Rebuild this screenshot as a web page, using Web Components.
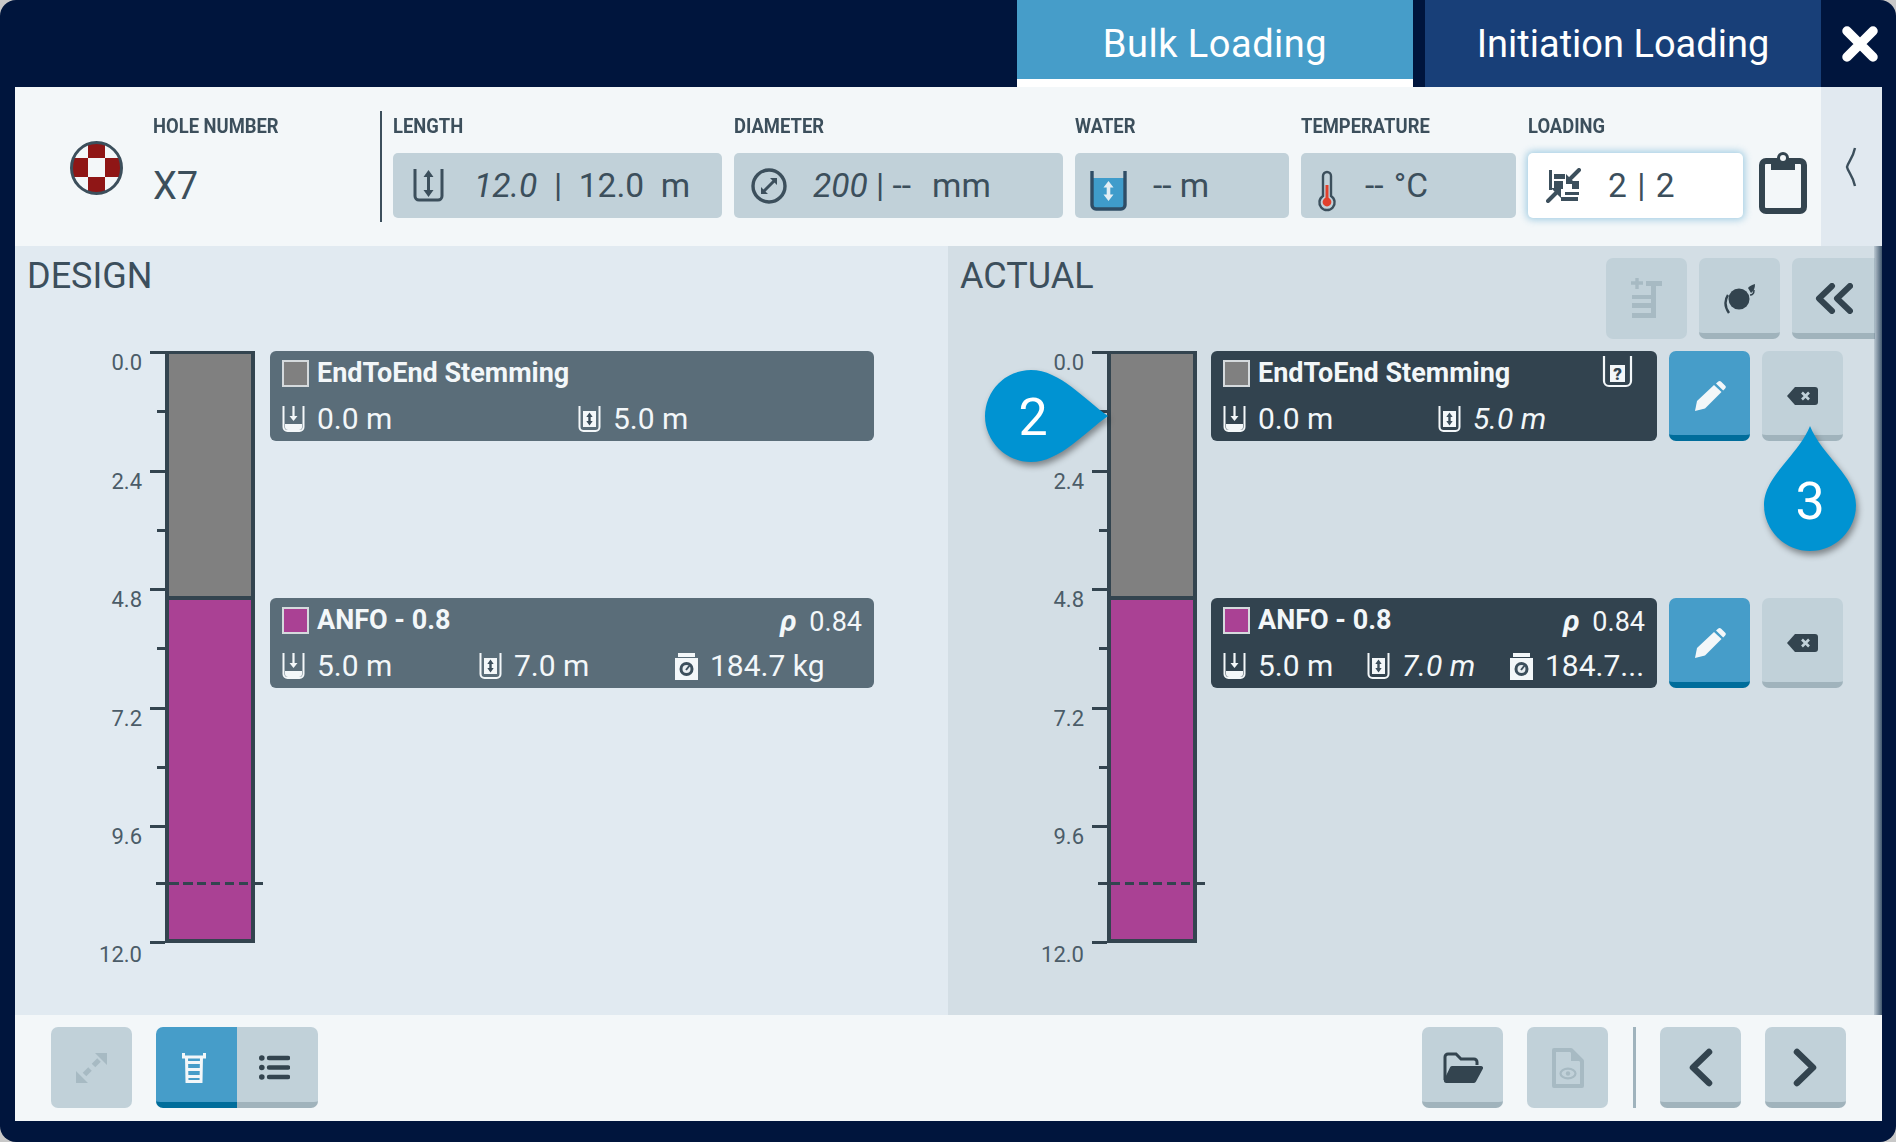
<!DOCTYPE html>
<html>
<head>
<meta charset="utf-8">
<title>Bulk Loading</title>
<style>
    html, body { margin: 0; padding: 0; background: #c8c8c8; }
    body { font-family: Roboto, "Liberation Sans", sans-serif; color: #3c4f5c; }
</style>
</head>
<body>

<load-frame>
    <tab-bar slot="top">
        <tab-item active>Bulk Loading</tab-item>
        <tab-item>Initiation Loading</tab-item>
    </tab-bar>

    <hole-header slot="header">
        <span slot="hole">X7</span>
        <info-field label="LENGTH" icon="length" w="329" iw="31" ih="34" pad="20" gap="30"><i>12.0</i>&nbsp;&nbsp;|&nbsp;&nbsp;12.0&nbsp;&nbsp;m</info-field>
        <info-field label="DIAMETER" icon="diameter" w="329" iw="36" ih="36" pad="17" gap="26"><i>200</i> | --&nbsp;&nbsp;&nbsp;<span style="margin-left:-4px">mm</span></info-field>
        <info-field label="WATER" icon="water" w="214" iw="37" ih="40" pad="15" gap="26">-- m</info-field>
        <info-field label="TEMPERATURE" icon="thermo" w="215" iw="18" ih="40" pad="17" gap="29">-- <span style="margin-left:2px">°C</span></info-field>
        <info-field label="LOADING" icon="loading" w="215" iw="36" ih="35" pad="18" gap="26" active>2 | 2</info-field>
    </hole-header>

    <deck-panel slot="design" heading="DESIGN">
        <depth-column></depth-column>
        <deck-list style="--card-w:604px">
            <deck-card color="#808080" style="--card-bg:#5a6d79">
                <span slot="title">EndToEnd Stemming</span>
                <deck-stat icon="cup-down" w="296">0.0 m</deck-stat>
                <deck-stat icon="cup-len">5.0 m</deck-stat>
            </deck-card>
            <deck-card color="#aa4194" density="0.84" style="--card-bg:#5a6d79">
                <span slot="title">ANFO - 0.8</span>
                <deck-stat icon="cup-down" w="197">5.0 m</deck-stat>
                <deck-stat icon="cup-len" w="196">7.0 m</deck-stat>
                <deck-stat icon="scale">184.7 kg</deck-stat>
            </deck-card>
        </deck-list>
    </deck-panel>

    <deck-panel slot="actual" heading="ACTUAL" actual>
        <icon-btn slot="actions" icon="add" iw="31" ih="41" disabled></icon-btn>
        <icon-btn slot="actions" icon="ball" iw="31" ih="31"></icon-btn>
        <icon-btn slot="actions" icon="dchev" iw="38" ih="31" wide></icon-btn>
        <depth-column></depth-column>
        <deck-list style="--card-w:446px">
            <deck-row>
                <deck-card color="#808080" unknown style="--card-bg:#32434f">
                    <span slot="title">EndToEnd Stemming</span>
                    <deck-stat icon="cup-down" w="215">0.0 m</deck-stat>
                    <deck-stat icon="cup-len" italic>5.0 m</deck-stat>
                </deck-card>
                <icon-btn slot="actions" icon="pencil" iw="32" ih="30" primary tall></icon-btn>
                <icon-btn slot="actions" icon="backspace" iw="31" ih="18" tall></icon-btn>
            </deck-row>
            <deck-row>
                <deck-card color="#aa4194" density="0.84" style="--card-bg:#32434f">
                    <span slot="title">ANFO - 0.8</span>
                    <deck-stat icon="cup-down" w="144">5.0 m</deck-stat>
                    <deck-stat icon="cup-len" w="143" italic>7.0 m</deck-stat>
                    <deck-stat icon="scale">184.7...</deck-stat>
                </deck-card>
                <icon-btn slot="actions" icon="pencil" iw="32" ih="30" primary tall></icon-btn>
                <icon-btn slot="actions" icon="backspace" iw="31" ih="18" tall></icon-btn>
            </deck-row>
        </deck-list>
        <drop-pin slot="pins" dir="right" style="left:37px;top:124px">2</drop-pin>
        <drop-pin slot="pins" dir="up" style="left:816px;top:180px">3</drop-pin>
    </deck-panel>

    <foot-bar slot="footer">
        <icon-btn icon="expand" iw="31" ih="30" disabled></icon-btn>
        <btn-group>
            <icon-btn icon="ladder" iw="24" ih="30" primary joined="left" shift="5"></icon-btn>
            <icon-btn icon="list" iw="31" ih="25" joined="right" shift="6"></icon-btn>
        </btn-group>
        <span class="spacer" style="flex:1"></span>
        <icon-btn icon="folder" iw="40" ih="31"></icon-btn>
        <icon-btn icon="file" iw="33" ih="40" disabled style="margin-left:24px"></icon-btn>
        <span style="width:3px;height:81px;background:#9fb3bd;margin:0 24px 0 25px"></span>
        <icon-btn icon="prev" iw="25" ih="39"></icon-btn>
        <icon-btn icon="next" iw="25" ih="39" style="margin-left:24px"></icon-btn>
    </foot-bar>
</load-frame>

<script>
const ICONS = {
    length: `<svg viewBox="0 0 31 34"><path d="M2 0V27a4 4 0 0 0 4 4H25a4 4 0 0 0 4-4V0" fill="none" stroke="currentColor" stroke-width="3"/><path d="M15.5 4V24" stroke="currentColor" stroke-width="3"/><path d="M15.5 1l5 7h-10zM15.5 28l5-7h-10z" fill="currentColor"/></svg>`,
    diameter: `<svg viewBox="0 0 36 36"><circle cx="18" cy="18" r="16" fill="none" stroke="currentColor" stroke-width="3.4"/><path d="M13 23L23 13" stroke="currentColor" stroke-width="3"/><path d="M26 10v7l-7-7zM10 26v-7l7 7z" fill="currentColor"/></svg>`,
    water: `<svg viewBox="0 0 37 40" style="margin-top:5px"><path d="M3 7H34V34a3 3 0 0 1-3 3H6a3 3 0 0 1-3-3z" fill="#3f9ccb"/><path d="M2 0V34a4 4 0 0 0 4 4H31a4 4 0 0 0 4-4V0" fill="none" stroke="#2f4d66" stroke-width="3.4"/><path d="M18.5 10l5 6.5h-3.2v7h3.2l-5 6.5-5-6.5h3.2v-7h-3.2z" fill="#e3eef4"/></svg>`,
    thermo: `<svg viewBox="0 0 18 40" style="margin-top:5px"><path d="M5 5a4 4 0 0 1 8 0V25a7.6 7.6 0 1 1-8 0z" fill="none" stroke="currentColor" stroke-width="2.4"/><rect x="7.5" y="14" width="3" height="14" fill="#e2402c"/><circle cx="9" cy="31" r="4.4" fill="#e2402c"/></svg>`,
    loading: `<svg viewBox="0 0 36 35"><path d="M3 2h3v20H3zM8 6h11v5H8zM8 13h9v8H8zM26 13h7v8h-7zM19 24h14v3H19zM15 29h17v4H15z" fill="currentColor"/><path d="M33 2L25 10M2 33L10 25" stroke="currentColor" stroke-width="4" stroke-linecap="round"/><path d="M20 16V6L30 16zM15 20V30L5 20z" fill="currentColor"/></svg>`,
    clipboard: `<svg viewBox="0 0 48 63"><rect x="3" y="10" width="42" height="50" rx="4" fill="none" stroke="currentColor" stroke-width="6"/><path d="M12 7H18a6 6 0 0 1 12 0H36V19H12z" fill="currentColor"/><circle cx="24" cy="7" r="3" fill="#f3f7f9"/></svg>`,
    strip: `<svg viewBox="0 0 14 40"><path d="M11 1C9 11 4 15 3 20C4 25 9 29 11 39" fill="none" stroke="currentColor" stroke-width="2.4"/></svg>`,
    add: `<svg viewBox="0 0 31 41"><path d="M0 5H12M6 -1V11" stroke="currentColor" stroke-width="3.4"/><path d="M15 3H31V8H25V40H1V35H20V30H1V25H20V21H1V17H20V8H15z" fill="currentColor"/></svg>`,
    ball: `<svg viewBox="0 0 31 31"><circle cx="15" cy="16" r="10.5" fill="currentColor"/><path d="M24 5C25 3 28 2 31 1C31 5 30 8 27 10z" fill="currentColor"/><path d="M4 12C0 18 1 24 5 30" fill="none" stroke="currentColor" stroke-width="2.4"/><path d="M26 12C29 12 30 10 30 7" fill="none" stroke="currentColor" stroke-width="1.5"/></svg>`,
    dchev: `<svg viewBox="0 0 38 31"><path d="M17 3L4 15.5L17 28M35 3L22 15.5L35 28" fill="none" stroke="currentColor" stroke-width="6" stroke-linecap="round" stroke-linejoin="round"/></svg>`,
    'cup-down': `<svg viewBox="0 0 23 27"><path d="M1.5 0V21a4 4 0 0 0 4 4H17.5a4 4 0 0 0 4-4V0" fill="none" stroke="currentColor" stroke-width="2"/><path d="M11.5 0V12" stroke="currentColor" stroke-width="2.2"/><path d="M7.5 10h8l-4 5z" fill="currentColor"/><path d="M3 18H20V21a3 3 0 0 1-3 3H6a3 3 0 0 1-3-3z" fill="currentColor"/></svg>`,
    'cup-len': `<svg viewBox="0 0 23 27"><path d="M1.5 0V21a4 4 0 0 0 4 4H17.5a4 4 0 0 0 4-4V0" fill="none" stroke="currentColor" stroke-width="2"/><rect x="5" y="5" width="13" height="16" fill="currentColor"/><path d="M11.5 6.5l3.2 4.4h-2v4.2h2l-3.2 4.4-3.2-4.4h2v-4.2h-2z" fill="#3c4f5c"/></svg>`,
    scale: `<svg viewBox="0 0 23 27"><path d="M3 0H20V4H3zM0 5H23V27H0z" fill="currentColor"/><circle cx="11.5" cy="16" r="7" fill="#3c4f5c"/><circle cx="11.5" cy="16" r="4" fill="#e9eef1"/><path d="M11 17L15 12" stroke="#3c4f5c" stroke-width="2"/></svg>`,
    pencil: `<svg viewBox="0 0 32 30"><path d="M1 30L3 20L20 4L27.5 11L11 27.5z" fill="currentColor"/><path d="M22 2.5L24 .8a2.4 2.4 0 0 1 3.2 0l3.8 3.6a2.4 2.4 0 0 1 0 3.4L29.2 9.4z" fill="currentColor"/></svg>`,
    backspace: `<svg viewBox="0 0 31 18"><path d="M8 0H28a3 3 0 0 1 3 3V15a3 3 0 0 1-3 3H8L0 9z" fill="currentColor"/><path d="M15 5.5L22 12.5M22 5.5L15 12.5" stroke="#c1d1d9" stroke-width="2.6"/></svg>`,
    expand: `<svg viewBox="0 0 31 30"><path d="M19 0H31V12zM0 18V30H12z" fill="currentColor"/><path d="M8.5 21.5L14 16M17.5 12.5L23 7" stroke="currentColor" stroke-width="5"/></svg>`,
    ladder: `<svg viewBox="0 0 24 30"><path d="M1.5 0V4H22.5V0M4.5 4L5 28.5H19L19.5 4M5 9.5H19M5 16.5H19M5 23.5H19" fill="none" stroke="currentColor" stroke-width="3"/></svg>`,
    list: `<svg viewBox="0 0 31 25"><circle cx="2.8" cy="3" r="2.8" fill="currentColor"/><circle cx="2.8" cy="12.5" r="2.8" fill="currentColor"/><circle cx="2.8" cy="22" r="2.8" fill="currentColor"/><path d="M10 3H29M10 12.5H29M10 22H29" stroke="currentColor" stroke-width="4.4" stroke-linecap="round"/></svg>`,
    folder: `<svg viewBox="0 0 40 31"><path d="M2 28V5a3 3 0 0 1 3-3h8l5 5h13a3 3 0 0 1 3 3v3" fill="none" stroke="currentColor" stroke-width="3"/><path d="M9 14H38a2 2 0 0 1 2 2.5L33 29.5A3 3 0 0 1 31 31H3a2.4 2.4 0 0 1-2-3L7 15.5A2 2 0 0 1 9 14z" fill="currentColor"/></svg>`,
    file: `<svg viewBox="0 0 33 40"><path d="M3 2H20L31 13V38H3z" fill="none" stroke="currentColor" stroke-width="4" stroke-linejoin="round"/><path d="M20 1L32 13H20z" fill="currentColor"/><ellipse cx="17" cy="25.5" rx="7.5" ry="4.8" fill="none" stroke="currentColor" stroke-width="2.2"/><circle cx="17" cy="25.5" r="2.2" fill="currentColor"/></svg>`,
    prev: `<svg viewBox="0 0 25 39"><path d="M21 4L5 19.5L21 35" fill="none" stroke="currentColor" stroke-width="6.5" stroke-linecap="round" stroke-linejoin="round"/></svg>`,
    next: `<svg viewBox="0 0 25 39"><path d="M4 4L20 19.5L4 35" fill="none" stroke="currentColor" stroke-width="6.5" stroke-linecap="round" stroke-linejoin="round"/></svg>`,
    close: `<svg viewBox="0 0 36 36"><path d="M5 5L31 31M31 5L5 31" fill="none" stroke="currentColor" stroke-width="9.5" stroke-linecap="round"/></svg>`,
    checker: `<svg viewBox="0 0 53 54"><defs><clipPath id="c"><ellipse cx="26.5" cy="27" rx="25" ry="25.5"/></clipPath></defs><g clip-path="url(#c)"><rect width="53" height="54" fill="#f3f7f9"/><path d="M18 0H35V17H18zM0 17H18V36H0zM35 17H53V36H35zM18 36H35V54H18z" fill="#8f1616"/></g><ellipse cx="26.5" cy="27" rx="25" ry="25.5" fill="none" stroke="currentColor" stroke-width="3"/></svg>`,
    unknown: `<svg viewBox="0 0 31 32"><path d="M2 0V25a5 5 0 0 0 5 5H24a5 5 0 0 0 5-5V0" fill="none" stroke="currentColor" stroke-width="2.2"/><rect x="8" y="9" width="15" height="17" fill="currentColor"/><text x="15.5" y="23.5" text-anchor="middle" font-family="Roboto" font-weight="900" font-size="17" fill="#32434f">?</text></svg>`
};

function iconHtml(name, w, h) {
    return `<span style="display:inline-flex;width:${w}px;height:${h}px;flex:none">${ICONS[name].replace('<svg ', `<svg width="${w}" height="${h}" `).replace('style="', 'style="overflow:visible;')}</span>`;
}

class Base extends HTMLElement {
    constructor() {
        super();
        this.attachShadow({ mode: 'open' });
    }
}

class LoadFrame extends Base {
    connectedCallback() {
        this.shadowRoot.innerHTML = `
            <style>
                :host { display: flex; flex-direction: column; width: 1896px; height: 1142px; box-sizing: border-box;
                        background: #00153d; border-radius: 16px; padding: 0 14px 21px 15px; overflow: hidden; }
                .panels { flex: 1; display: flex; min-height: 0; }
            </style>
            <slot name="top"></slot>
            <slot name="header"></slot>
            <div class="panels"><slot name="design"></slot><slot name="actual"></slot></div>
            <slot name="footer"></slot>
        `;
    }
}

class TabBar extends Base {
    connectedCallback() {
        this.shadowRoot.innerHTML = `
            <style>
                :host { display: flex; justify-content: flex-end; gap: 12px; height: 87px; position: relative; }
                .close { width: 61px; margin-left: -12px; display: flex; align-items: center; justify-content: flex-start; color: #fff; padding-left: 21px; box-sizing: border-box; }
            </style>
            <slot></slot>
            <div class="close">${iconHtml('close', 36, 36)}</div>
        `;
    }
}

class TabItem extends Base {
    connectedCallback() {
        this.shadowRoot.innerHTML = `
            <style>
                :host { display: flex; align-items: center; justify-content: center; width: 396px; height: 87px; box-sizing: border-box;
                        background: #183f78; color: #fff; font-size: 38px; }
                :host([active]) { background: #469dc9; box-shadow: inset 0 -8px 0 #fff; letter-spacing: .5px; }
            </style>
            <slot></slot>
        `;
    }
}

class HoleHeader extends Base {
    connectedCallback() {
        this.shadowRoot.innerHTML = `
            <style>
                :host { display: flex; height: 159px; background: #f3f7f9; color: #3c4f5c; }
                .hole { width: 365px; flex: none; display: flex; box-sizing: border-box; padding: 54px 0 0 55px; gap: 30px; }
                .hole-text { display: flex; flex-direction: column; margin-top: -27px; }
                .lbl { font-size: 20px; font-weight: 700; line-height: 24px; transform: scaleX(.92); transform-origin: left; white-space: nowrap; }
                .num { font-size: 38px; line-height: 44px; margin-top: 26px; }
                .div { width: 2px; height: 111px; margin-top: 24px; background: #3c4f5c; flex: none; margin-right: 11px; }
                .fields { display: flex; gap: 12px; flex: none; }
                .clip { margin: 64px 0 0 16px; color: #33444f; }
                .strip { margin-left: auto; width: 61px; background: #e1e9f0; color: #3c4f5c; padding: 60px 0 0 23px; box-sizing: border-box; }
            </style>
            <div class="hole">
                ${iconHtml('checker', 53, 54)}
                <div class="hole-text"><div class="lbl">HOLE NUMBER</div><div class="num"><slot name="hole"></slot></div></div>
            </div>
            <div class="div"></div>
            <div class="fields"><slot></slot></div>
            <div class="clip">${iconHtml('clipboard', 48, 63)}</div>
            <div class="strip">${iconHtml('strip', 14, 40)}</div>
        `;
    }
}

class InfoField extends Base {
    connectedCallback() {
        const a = n => this.getAttribute(n);
        this.shadowRoot.innerHTML = `
            <style>
                :host { display: flex; flex-direction: column; width: ${a('w')}px; padding-top: 27px; box-sizing: border-box; }
                .lbl { font-size: 20px; font-weight: 700; line-height: 24px; height: 24px; margin-bottom: 15px; transform: scaleX(.92); transform-origin: left; white-space: nowrap; }
                .box { height: 65px; background: #c1d1d9; border-radius: 5px; display: flex; align-items: center; padding-left: ${a('pad')}px; gap: ${a('gap')}px;
                       font-size: 33.5px; white-space: nowrap; box-sizing: border-box; }
                :host([active]) .box { background: #fff; box-shadow: 0 0 7px 2px rgba(70,157,201,.45); word-spacing: 2px; }
            </style>
            <div class="lbl">${a('label')}</div>
            <div class="box">${iconHtml(a('icon'), a('iw'), a('ih'))}<span><slot></slot></span></div>
        `;
    }
}

class DeckPanel extends Base {
    connectedCallback() {
        this.shadowRoot.innerHTML = `
            <style>
                :host { display: block; width: 933px; flex: none; position: relative; background: #e1eaf1; box-sizing: border-box; --axis-w: 126px; --axis-gap: 15px; }
                :host([actual]) { width: 934px; background: #d3dee5; --axis-w: 135px; --axis-gap: 14px; }
                .head { height: 105px; display: flex; justify-content: space-between; box-sizing: border-box; padding: 0 7px 0 12px; }
                h2 { margin: 10px 0 0; font-size: 36px; line-height: 40px; font-weight: 400; }
                .actions { display: flex; gap: 12px; padding-top: 12px; }
                .chart { display: flex; align-items: flex-start; }
                :host([actual]) .edge { position: absolute; top: 0; bottom: 0; right: 0; width: 8px;
                        background: linear-gradient(to right, rgba(60,85,110,.15), rgba(40,65,90,.85)); }
            </style>
            <div class="head"><h2>${this.getAttribute('heading')}</h2><div class="actions"><slot name="actions"></slot></div></div>
            <div class="chart"><slot></slot></div>
            <slot name="pins"></slot>
            <div class="edge"></div>
        `;
    }
}

class DepthColumn extends Base {
    connectedCallback() {
        let ticks = '';
        for (let i = 0; i <= 10; i++) {
            const major = i % 2 === 0;
            const label = major ? `<span class="v" ${i === 10 ? 'style="margin-top:1px"' : ''}>${(i * 1.2).toFixed(1)}</span>` : '';
            // the last interval of the scale is a bit shorter than the others
            const pull = i === 9 ? 'margin-top:-2px' : i === 10 ? 'margin-top:-1px' : '';
            ticks += `<div class="tick" style="${pull}">${label}<b class="${major ? 'maj' : 'min'}"></b></div>`;
        }
        this.shadowRoot.innerHTML = `
            <style>
                :host { display: flex; flex: none; height: 592px; margin-right: var(--axis-gap); }
                .axis { width: calc(var(--axis-w) + 24px); display: flex; flex-direction: column; gap: 56.25px; }
                .tick { display: flex; justify-content: flex-end; height: 3px; }
                .v { font-size: 22px; line-height: 26px; height: 3px; margin: -1px 8px 0 0; color: #4b5c68; }
                .tick b { height: 3px; background: #33444f; display: block; }
                .maj { width: 15px; }
                .min { width: 8px; }
                .bar { width: 90px; box-sizing: border-box; border: 4px solid #33444f; border-top-width: 3px; display: flex; flex-direction: column; position: relative; }
                .stem { flex: 5; background: #808080; border-bottom: 4px solid #33444f; }
                .anfo { flex: 7; background: #aa4194; }
                .limit { position: absolute; left: -13px; right: -12px; top: 528px; height: 3px; display: flex; }
                .limit i { width: 9px; background: #33444f; }
                .limit u { flex: 1; margin: 0 4px; background: repeating-linear-gradient(to right, #33444f 0 9.5px, transparent 9.5px 14px); }
            </style>
            <div class="axis">${ticks}</div>
            <div class="bar">
                <div class="stem"></div><div class="anfo"></div>
                <div class="limit"><i></i><u></u><i></i></div>
            </div>
        `;
    }
}

class DeckList extends Base {
    connectedCallback() {
        this.shadowRoot.innerHTML = `
            <style>:host { display: flex; flex-direction: column; gap: 157px; }</style>
            <slot></slot>
        `;
    }
}

class DeckRow extends Base {
    connectedCallback() {
        this.shadowRoot.innerHTML = `
            <style>
                :host { display: flex; gap: 12px; }
                .actions { display: flex; gap: 12px; }
            </style>
            <slot></slot><div class="actions"><slot name="actions"></slot></div>
        `;
    }
}

class DeckCard extends Base {
    connectedCallback() {
        const density = this.getAttribute('density');
        const color = this.getAttribute('color');
        this.shadowRoot.innerHTML = `
            <style>
                :host { display: flex; flex-direction: column; width: var(--card-w); height: 90px; box-sizing: border-box; flex: none;
                        background: var(--card-bg); border-radius: 6px; color: #f3f7f9; padding: 9px 12px 0 12px; }
                .top { display: flex; align-items: center; height: 27px; gap: 8px; }
                .sw { width: 27px; height: 27px; box-sizing: border-box; border: 2px solid #d5dadd; background: ${color}; flex: none; }
                .title { font-size: 27px; font-weight: 700; white-space: nowrap; flex: 1; line-height: 25px; }
                .rho { font-size: 27px; white-space: nowrap; }
                .rho i { font-weight: 700; font-size: 30px; margin-right: 6px; }
                .q { margin-right: 12px; }
                .stats { display: flex; margin-top: 18px; }
            </style>
            <div class="top">
                <div class="sw"></div>
                <div class="title"><slot name="title"></slot></div>
                ${density ? `<div class="rho"><i>ρ</i> ${density}</div>` : ''}
                ${this.hasAttribute('unknown') ? `<span class="q">${iconHtml('unknown', 31, 32)}</span>` : ''}
            </div>
            <div class="stats"><slot></slot></div>
        `;
    }
}

class DeckStat extends Base {
    connectedCallback() {
        const w = this.getAttribute('w');
        const it = this.hasAttribute('italic');
        this.shadowRoot.innerHTML = `
            <style>
                :host { display: flex; align-items: center; gap: 12px; font-size: 30px; line-height: 28px; white-space: nowrap; ${w ? `width:${w}px;flex:none;` : ''} ${it ? 'font-style:italic;' : ''} }
            </style>
            ${iconHtml(this.getAttribute('icon'), 23, 27)}<span><slot></slot></span>
        `;
    }
}

class IconBtn extends Base {
    connectedCallback() {
        const a = n => this.getAttribute(n);
        const joined = a('joined');
        const radius = joined === 'left' ? '7px 0 0 7px' : joined === 'right' ? '0 7px 7px 0' : '7px';
        const shift = a('shift') || 0;
        this.shadowRoot.innerHTML = `
            <style>
                :host { display: flex; align-items: center; justify-content: center; width: 81px; height: 81px; box-sizing: border-box; flex: none;
                        background: #c1d1d9; color: #33444f; border-radius: ${radius}; border-bottom: 6px solid #a0b3bc; padding: 6px ${shift}px 0 0; }
                :host([tall]) { height: 90px; }
                :host([wide]) { width: 83px; border-radius: 7px 0 0 7px; }
                :host([primary]) { background: #469dc9; color: #f3f7f9; border-bottom-color: #006d9b; }
                :host([disabled]) { border-bottom: 0; padding-top: 0; color: #a7bac3; }
            </style>
            ${iconHtml(a('icon'), a('iw'), a('ih'))}
        `;
    }
}

class BtnGroup extends Base {
    connectedCallback() {
        this.shadowRoot.innerHTML = `
            <style>:host { display: flex; margin-left: 24px; }</style>
            <slot></slot>
        `;
    }
}

class FootBar extends Base {
    connectedCallback() {
        this.shadowRoot.innerHTML = `
            <style>
                :host { display: flex; height: 106px; box-sizing: border-box; padding: 12px 36px 0; background: #f3f7f9; align-items: flex-start; }
            </style>
            <slot></slot>
        `;
    }
}

class DropPin extends Base {
    connectedCallback() {
        const right = this.getAttribute('dir') === 'right';
        const shape = right
            ? `<svg width="123" height="92" viewBox="0 0 123 92"><path d="M46 0C75 0 100 30 123 46C100 62 75 92 46 92A46 46 0 0 1 46 0Z" fill="#0093d2"/></svg>`
            : `<svg width="92" height="125" viewBox="0 0 92 125"><path d="M46 0C58 30 92 50 92 79A46 46 0 0 1 0 79C0 50 34 30 46 0Z" fill="#0093d2"/></svg>`;
        this.shadowRoot.innerHTML = `
            <style>
                :host { position: absolute; display: block; filter: drop-shadow(2px 4px 3px rgba(0,0,0,.4)); }
                svg { display: block; }
                .n { position: absolute; color: #fff; font-size: 52px; line-height: 60px; width: 92px; text-align: center; top: ${right ? 18 : 46}px; left: ${right ? 2 : 0}px; }
            </style>
            ${shape}
            <div class="n"><slot></slot></div>
        `;
    }
}

customElements.define('load-frame', LoadFrame);
customElements.define('tab-bar', TabBar);
customElements.define('tab-item', TabItem);
customElements.define('hole-header', HoleHeader);
customElements.define('info-field', InfoField);
customElements.define('deck-panel', DeckPanel);
customElements.define('depth-column', DepthColumn);
customElements.define('deck-list', DeckList);
customElements.define('deck-row', DeckRow);
customElements.define('deck-card', DeckCard);
customElements.define('deck-stat', DeckStat);
customElements.define('icon-btn', IconBtn);
customElements.define('btn-group', BtnGroup);
customElements.define('foot-bar', FootBar);
customElements.define('drop-pin', DropPin);
</script>
</body>
</html>
